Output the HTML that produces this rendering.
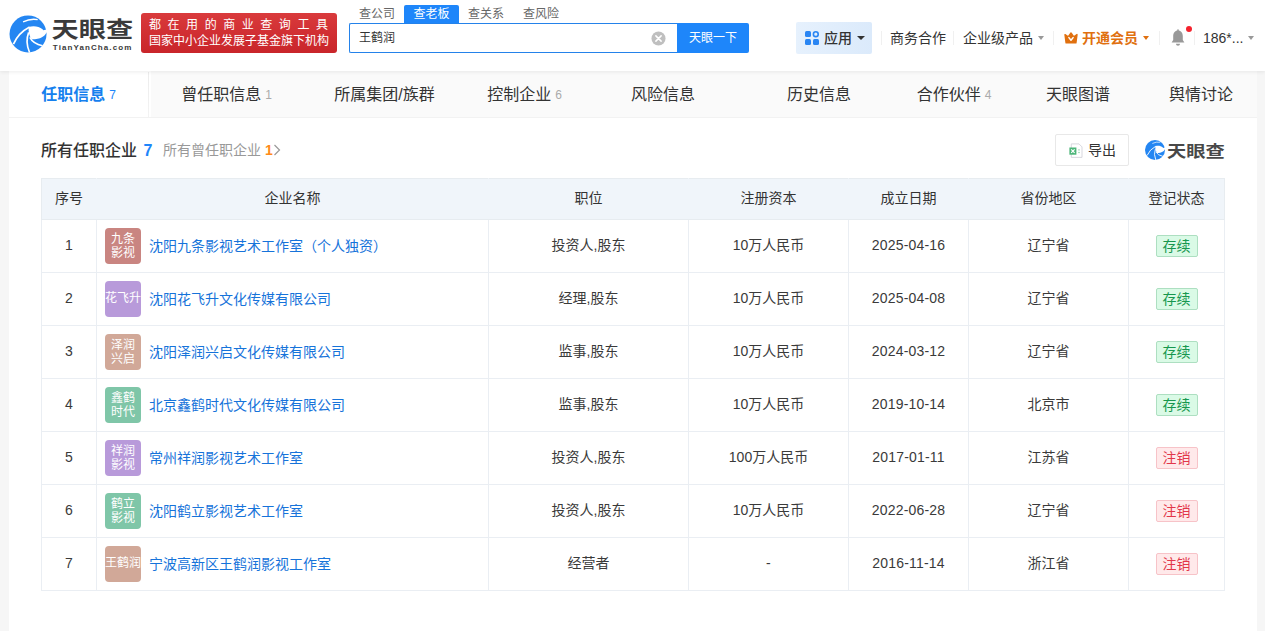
<!DOCTYPE html>
<html lang="zh-CN">
<head>
<meta charset="utf-8">
<title>王鹤润 - 天眼查</title>
<style>
*{box-sizing:border-box;margin:0;padding:0}
html,body{width:1265px;height:631px;overflow:hidden}
body{background:#f6f6f6;font-family:"Liberation Sans","Noto Sans CJK SC",sans-serif;font-size:14px;color:#333;position:relative}
.abs{position:absolute}
#header{position:absolute;left:0;top:0;width:1265px;height:71px;background:#fff;box-shadow:0 1px 4px rgba(0,0,0,.08);z-index:5}
#logo{position:absolute;left:9px;top:13px;width:128px;height:42px}
#slogan{position:absolute;left:141px;top:13px;width:196px;height:40px;border-radius:3px;background:linear-gradient(#d93a3c,#c9252a);color:#fff;font-size:12px;line-height:16px;padding:4px 0 0 8px;white-space:nowrap;overflow:hidden}
#slogan .l1{letter-spacing:6.55px;display:block}
#slogan .l2{display:block;letter-spacing:0}
.stab{position:absolute;top:5px;height:18px;line-height:18px;font-size:12px;color:#666;white-space:nowrap}
.stab.on{background:#1e86fa;color:#fff;width:55px;text-align:center;border-radius:2px 2px 0 0}
#sinput{position:absolute;left:349px;top:23px;width:330px;height:30px;border:1px solid #2482ea;border-right:0;border-radius:2px 0 0 2px;background:#fff;font-size:12px;line-height:29px;padding-left:9px;color:#333}
#sbtn{position:absolute;left:677px;top:23px;width:72px;height:30px;background:#1e86fa;color:#fff;font-size:12px;line-height:30px;text-align:center;border-radius:0 2px 2px 0}
#sclear{position:absolute;left:650.5px;top:30.5px;width:15px;height:15px}
.nav{position:absolute;top:22px;height:32px;line-height:32px;font-size:14px;color:#333;white-space:nowrap}
.caret{display:inline-block;width:0;height:0;border-left:3.5px solid transparent;border-right:3.5px solid transparent;border-top:4px solid #999;vertical-align:middle;margin-left:5px;position:relative;top:-1px}
.sep{position:absolute;top:31px;width:1px;height:14px;background:#f0f0f0}
#card{position:absolute;left:9px;top:71px;width:1248px;height:560px;background:#fff}
#tabs{position:absolute;left:0;top:0;width:1248px;height:47px;background:#fafafa;border-bottom:1px solid #f2f2f2}
.tab{position:absolute;top:0;height:46px;line-height:48px;font-size:16px;color:#333;text-align:center;white-space:nowrap}
.tab.on{background:#fff;color:#1580ee;font-weight:700}
.tab small{font-size:12px;color:#aaa;font-weight:400;margin-left:4px;position:relative;top:-1px}
.tab.on small{color:#1e86fa}
#title{position:absolute;left:32px;top:67.5px;height:24px;line-height:24px;font-size:16px;font-weight:500;word-spacing:2px;color:#333;white-space:nowrap}
#title b{color:#1e86fa}
#title2{position:absolute;left:154px;top:67px;height:24px;line-height:24px;font-size:14px;color:#999;white-space:nowrap}
#title2 b{color:#ff8a19}
#export{position:absolute;left:1046px;top:63px;width:74px;height:32px;border:1px solid #e8e8e8;border-radius:2px;font-size:14px;line-height:30px;color:#333;padding-left:32px;background:#fff}
#wm{position:absolute;left:1134px;top:66px;width:84px;height:26px}
table{position:absolute;left:32px;top:107px;width:1183px;border-collapse:collapse;table-layout:fixed;font-size:14px}
th{height:41px;background:#f0f5fa;font-weight:400;color:#333;border:1px solid #e7ecf0;border-left-color:#f0f5fa;border-right-color:#f0f5fa;text-align:center;padding-bottom:4px}
th:first-child{border-left-color:#e7ecf0}th:last-child{border-right-color:#e7ecf0}
td{height:53px;border:1px solid #eaeef3;text-align:center;color:#3a3a3a;vertical-align:middle;white-space:nowrap;padding-bottom:4px}
td.n{padding-bottom:2px;letter-spacing:.17px}
td.name{text-align:left;padding-left:52px;padding-bottom:3px;position:relative}
td.name a{color:#1673da;text-decoration:none;vertical-align:middle}
.ico{position:absolute;left:8px;top:8px;width:36px;height:36px;border-radius:4px;color:#fff;font-size:12px;line-height:14px;text-align:center;vertical-align:middle;margin-right:8px;overflow:hidden;white-space:normal}
.ico.two{padding-top:4px}
.ico.one{line-height:35px;font-size:12px;white-space:nowrap}
.c1{background:#c98581}.c2{background:#b89ada}.c3{background:#d1a898}.c4{background:#7fc6a8}
.tag{display:inline-block;height:22px;line-height:20px;padding:0 6px;position:relative;top:2px;font-size:14px;border-radius:2px}
.tag.g{color:#17974e;background:#dafae6;border:1px solid #addfc1}
.tag.r{color:#e2374a;background:#ffe9ea;border:1px solid #f7c3c8}
</style>
</head>
<body>
<div id="header">
  <svg id="logo" viewBox="0 0 128 42">
    <defs><g id="swirl">
      <circle cx="316" cy="315" r="292" fill="#2486f2"/>
      <path d="M325 205 C400 183 490 193 545 240 L558 258 L640 236 L640 292 L606 290 C580 350 520 395 375 400 C335 350 320 280 325 205 Z" fill="#fff"/>
      <path d="M86 474 Q160 300 340 204" fill="none" stroke="#fff" stroke-width="27"/>
      <path d="M238 124 Q350 68 468 88" fill="none" stroke="#fff" stroke-width="21"/>
      <path d="M340 608 Q268 440 326 290" fill="none" stroke="#fff" stroke-width="26"/>
      <path d="M345 370 Q395 472 545 500" fill="none" stroke="#fff" stroke-width="25"/>
    </g></defs>
    <use href="#swirl" transform="translate(-1,1) scale(0.06339)"/>
    <text x="42.6" y="23.6" font-family="'Liberation Sans','Noto Sans CJK SC',sans-serif" font-weight="700" font-size="21.6" fill="#3a3a3a" textLength="81.6" lengthAdjust="spacingAndGlyphs">天眼查</text>
    <text x="43.8" y="37" font-family="'Liberation Sans',sans-serif" font-weight="700" font-size="8" fill="#3a3a3a" textLength="78.5" lengthAdjust="spacing">TianYanCha.com</text>
  </svg>
  <div id="slogan"><span class="l1">都在用的商业查询工具</span><span class="l2">国家中小企业发展子基金旗下机构</span></div>
  <div class="stab" style="left:359px">查公司</div>
  <div class="stab on" style="left:404px">查老板</div>
  <div class="stab" style="left:468px">查关系</div>
  <div class="stab" style="left:523px">查风险</div>
  <div id="sinput">王鹤润</div>
  <svg id="sclear" viewBox="0 0 16 16"><circle cx="8" cy="8" r="7.5" fill="#bfbfbf"/><path d="M5.2 5.2 L10.8 10.8 M10.8 5.2 L5.2 10.8" stroke="#fff" stroke-width="1.6" stroke-linecap="round"/></svg>
  <div id="sbtn">天眼一下</div>

  <div class="nav" style="left:796px;width:76px;background:linear-gradient(90deg,#e6f1fd,#dbeafb);border-radius:2px;padding-left:28px;font-weight:500;font-size:14px">应用<span class="caret" style="border-top-color:#333;border-left-width:4px;border-right-width:4px"></span></div>
  <svg class="abs" style="left:805px;top:31px;width:14px;height:14px" viewBox="0 0 14 14"><rect x="0" y="0" width="6" height="6" rx="1.5" fill="#2a86f3"/><circle cx="10.8" cy="3.2" r="2.4" fill="none" stroke="#2a86f3" stroke-width="1.6"/><rect x="0" y="8" width="6" height="6" rx="1.5" fill="#2a86f3"/><rect x="8" y="8" width="6" height="6" rx="1.5" fill="#2a86f3"/></svg>
  <div class="sep" style="left:881px"></div>
  <div class="nav" style="left:890px">商务合作</div>
  <div class="sep" style="left:953px"></div>
  <div class="nav" style="left:963px">企业级产品<span class="caret"></span></div>
  <div class="sep" style="left:1053px"></div>
  <svg class="abs" style="left:1064px;top:31.5px;width:14px;height:12px" viewBox="0 0 14 12"><path d="M1 2.6 L4.2 4.8 L7 1 L9.8 4.8 L13 2.6 L11.9 10.8 L2.1 10.8 Z" fill="#e0700f" stroke="#e0700f" stroke-width="1.4" stroke-linejoin="round"/><path d="M4.9 5.6 L7 8.2 L9.1 5.6" fill="none" stroke="#fff" stroke-width="1.5" stroke-linejoin="round" stroke-linecap="round"/></svg>
  <div class="nav" style="left:1082px;color:#e0700f;font-weight:700">开通会员<span class="caret" style="border-top-color:#e0700f"></span></div>
  <div class="sep" style="left:1159px"></div>
  <svg class="abs" style="left:1170px;top:29px;width:16px;height:18px" viewBox="0 0 16 18"><path d="M8 1.5 C4.8 1.5 3.2 4 3.2 7 L3.2 11 L1.6 13.4 L14.4 13.4 L12.8 11 L12.8 7 C12.8 4 11.2 1.5 8 1.5 Z" fill="#999"/><rect x="7.2" y="0.3" width="1.6" height="2" rx=".8" fill="#999"/><path d="M6 14.8 L10 14.8 C10 16 9.2 16.8 8 16.8 C6.8 16.8 6 16 6 14.8Z" fill="#999"/></svg>
  <div class="abs" style="left:1186px;top:26px;width:6px;height:6px;border-radius:3px;background:#f5222d"></div>
  <div class="sep" style="left:1194px"></div>
  <div class="nav" style="left:1203px">186*...<span class="caret"></span></div>
</div>

<div id="card">
  <div id="tabs">
    <div class="tab on" style="left:0;width:142px;padding-right:3px">任职信息<small>7</small></div><div class="abs" style="left:139px;top:1px;width:1px;height:45px;background:linear-gradient(#ececec,#f3f3f3)"></div>
    <div class="tab" style="left:139px;width:157px">曾任职信息<small>1</small></div>
    <div class="tab" style="left:296px;width:159px">所属集团/族群</div>
    <div class="tab" style="left:455px;width:121px">控制企业<small>6</small></div>
    <div class="tab" style="left:576px;width:156px">风险信息</div>
    <div class="tab" style="left:732px;width:156px">历史信息</div>
    <div class="tab" style="left:888px;width:114px">合作伙伴<small>4</small></div>
    <div class="tab" style="left:1002px;width:134px">天眼图谱</div>
    <div class="tab" style="left:1136px;width:112px">舆情讨论</div>
  </div>
  <div id="title">所有任职企业 <b>7</b></div>
  <div id="title2">所有曾任职企业 <b>1</b><svg width="8" height="12" viewBox="0 0 8 12" style="vertical-align:-1px"><path d="M1.5 1 L6.5 6 L1.5 11" fill="none" stroke="#999" stroke-width="1.2"/></svg></div>
  <div id="export">导出</div>
  <svg class="abs" style="left:1059.5px;top:71.5px;width:14px;height:15px" viewBox="0 0 14 15"><path d="M2.3 .9 H10 L13 3.9 V14.4 H2.3 Z" fill="#fff" stroke="#d2d2da" stroke-width=".9"/><rect x=".4" y="4.5" width="7" height="7.2" fill="#4bb578"/><path d="M2.2 6.3 L5.6 9.9 M5.6 6.3 L2.2 9.9" stroke="#fff" stroke-width="1.2"/><rect x="9.3" y="6.3" width="1.4" height="1.2" fill="#8fd3aa"/><rect x="9.3" y="8.9" width="1.4" height="1.2" fill="#8fd3aa"/></svg>
  <svg id="wm" viewBox="0 0 84 26">
    <use href="#swirl" transform="translate(1.18,2.21) scale(0.03425)"/>
    <text x="24.1" y="19.6" font-family="'Liberation Sans','Noto Sans CJK SC',sans-serif" font-weight="700" font-size="15.4" fill="#484848" textLength="57.8" lengthAdjust="spacingAndGlyphs">天眼查</text>
  </svg>

  <table>
    <colgroup><col style="width:55px"><col style="width:392px"><col style="width:200px"><col style="width:160px"><col style="width:120px"><col style="width:160px"><col style="width:96px"></colgroup>
    <tr><th>序号</th><th>企业名称</th><th>职位</th><th>注册资本</th><th>成立日期</th><th>省份地区</th><th>登记状态</th></tr>
    <tr><td class="n">1</td><td class="name"><span class="ico two c1">九条<br>影视</span><a>沈阳九条影视艺术工作室（个人独资）</a></td><td>投资人,股东</td><td>10万人民币</td><td class="n">2025-04-16</td><td>辽宁省</td><td><span class="tag g">存续</span></td></tr>
    <tr><td class="n">2</td><td class="name"><span class="ico one c2">花飞升</span><a>沈阳花飞升文化传媒有限公司</a></td><td>经理,股东</td><td>10万人民币</td><td class="n">2025-04-08</td><td>辽宁省</td><td><span class="tag g">存续</span></td></tr>
    <tr><td class="n">3</td><td class="name"><span class="ico two c3">泽润<br>兴启</span><a>沈阳泽润兴启文化传媒有限公司</a></td><td>监事,股东</td><td>10万人民币</td><td class="n">2024-03-12</td><td>辽宁省</td><td><span class="tag g">存续</span></td></tr>
    <tr><td class="n">4</td><td class="name"><span class="ico two c4">鑫鹤<br>时代</span><a>北京鑫鹤时代文化传媒有限公司</a></td><td>监事,股东</td><td>10万人民币</td><td class="n">2019-10-14</td><td>北京市</td><td><span class="tag g">存续</span></td></tr>
    <tr><td class="n">5</td><td class="name"><span class="ico two c2">祥润<br>影视</span><a>常州祥润影视艺术工作室</a></td><td>投资人,股东</td><td>100万人民币</td><td class="n">2017-01-11</td><td>江苏省</td><td><span class="tag r">注销</span></td></tr>
    <tr><td class="n">6</td><td class="name"><span class="ico two c4">鹤立<br>影视</span><a>沈阳鹤立影视艺术工作室</a></td><td>投资人,股东</td><td>10万人民币</td><td class="n">2022-06-28</td><td>辽宁省</td><td><span class="tag r">注销</span></td></tr>
    <tr><td class="n">7</td><td class="name"><span class="ico one c3">王鹤润</span><a>宁波高新区王鹤润影视工作室</a></td><td>经营者</td><td class="n">-</td><td class="n">2016-11-14</td><td>浙江省</td><td><span class="tag r">注销</span></td></tr>
  </table>
</div>
</body>
</html>
